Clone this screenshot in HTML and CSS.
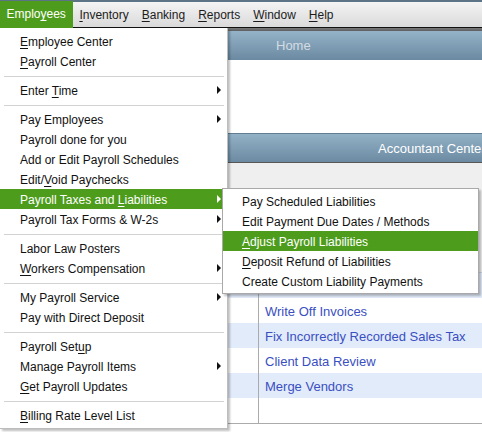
FILE: index.html
```html
<!DOCTYPE html>
<html lang="en">
<head>
    <meta charset="UTF-8">
    <meta name="viewport" content="width=device-width, initial-scale=1.0">
    <title>Employees Menu</title>
    <link rel="stylesheet" href="styles.css">
</head>
<body>
    <div class="menubar">
        <span class="mb-item active">Emplo<u>y</u>ees</span>
        <span class="mb-item"><u>I</u>nventory</span>
        <span class="mb-item"><u>B</u>anking</span>
        <span class="mb-item"><u>R</u>eports</span>
        <span class="mb-item"><u>W</u>indow</span>
        <span class="mb-item"><u>H</u>elp</span>
    </div>

    <div class="app">
        <div class="strip"></div>
        <div class="bar home-bar"><span class="home-title">Home</span></div>
        <div class="blank"></div>
        <div class="bar center-bar"><span class="center-title">Accountant Center</span></div>
        <div class="panel"></div>
        <div class="tasks">
            <div class="task alt"><span class="gutter"></span></div>
            <div class="task"><span class="gutter"></span><a class="task-link">Write Off Invoices</a></div>
            <div class="task alt"><span class="gutter"></span><a class="task-link">Fix Incorrectly Recorded Sales Tax</a></div>
            <div class="task"><span class="gutter"></span><a class="task-link">Client Data Review</a></div>
            <div class="task alt"><span class="gutter"></span><a class="task-link">Merge Vendors</a></div>
            <div class="task"><span class="gutter"></span></div>
        </div>
    </div>

    <div class="menu">
        <div class="item"><u>E</u>mployee Center</div>
        <div class="item"><u>P</u>ayroll Center</div>
        <div class="sep"></div>
        <div class="item sub">Enter <u>T</u>ime</div>
        <div class="sep"></div>
        <div class="item sub">Pay Employees</div>
        <div class="item">Payroll done for you</div>
        <div class="item">Add or Edit Payroll Schedules</div>
        <div class="item">Edit/<u>V</u>oid Paychecks</div>
        <div class="item sub selected">Payroll Taxes and <u>L</u>iabilities</div>
        <div class="item sub">Payroll Tax Forms &amp; W-2s</div>
        <div class="sep"></div>
        <div class="item">Labor Law Posters</div>
        <div class="item sub"><u>W</u>orkers Compensation</div>
        <div class="sep"></div>
        <div class="item sub">My Payroll Service</div>
        <div class="item">Pay with Direct Deposit</div>
        <div class="sep"></div>
        <div class="item">Payroll Set<u>u</u>p</div>
        <div class="item sub">Manage Payroll Items</div>
        <div class="item"><u>G</u>et Payroll Updates</div>
        <div class="sep"></div>
        <div class="item"><u>B</u>illing Rate Level List</div>
    </div>

    <div class="submenu">
        <div class="item">Pay Scheduled Liabilities</div>
        <div class="item">Edit Payment Due Dates / Methods</div>
        <div class="item selected"><u>A</u>djust Payroll Liabilities</div>
        <div class="item"><u>D</u>eposit Refund of Liabilities</div>
        <div class="item">Create Custom Liability Payments</div>
    </div>
</body>
</html>
```

FILE: styles.css
```css
body {
    font-family: "Liberation Sans", Arial, sans-serif;
    font-size: 12px;
    margin: 0;
    width: 482px;
    height: 432px;
    overflow: hidden;
    position: relative;
    background: #fff;
    color: #111;
}

u {
    text-decoration-thickness: 1px;
    text-underline-offset: 2px;
}

/* top menu bar */

.menubar {
    display: flex;
    height: 25px;
    border-top: 2px solid #5d7386;
    border-bottom: 1px solid #111;
    background: linear-gradient(#f4f4f4, #dadada);
    white-space: nowrap;
}

.mb-item {
    padding: 0 6.5px;
    line-height: 26px;
    color: #1c1c1c;
}

.mb-item.active {
    background-color: #4e9c1c;
    color: #fff;
    margin-top: -1px;
    margin-bottom: -1px;
    line-height: 27px;
    padding-right: 7px;
    position: relative;
}

/* application window behind the menu */

.strip {
    height: 3px;
    background: linear-gradient(#7a7a7a, #5e5e5e);
}

.bar {
    display: flex;
    align-items: center;
    white-space: nowrap;
    overflow: hidden;
    font-size: 13px;
}

.home-bar {
    height: 29px;
    background: linear-gradient(#94b2c8, #6b8aa1);
}

.home-title {
    padding-left: 276px;
    color: #d4dce3;
}

.blank {
    height: 73px;
}

.center-bar {
    height: 28px;
    border-top: 1px solid #627d91;
    border-bottom: 1px solid #575757;
    background: linear-gradient(#92b0c6, #6c8ba2);
}

.center-title {
    padding-left: 378px;
    color: #fff;
}

.panel {
    height: 109px;
    background-color: #efefef;
}

.tasks {
    border-top: 1px solid #c9d3e0;
    border-bottom: 1px solid #ababab;
}

.task {
    display: flex;
    height: 25px;
    align-items: center;
    white-space: nowrap;
    font-size: 13px;
}

.task.alt {
    background-color: #e2ebfa;
}

.gutter {
    flex: none;
    width: 258px;
    height: 100%;
    border-right: 1px solid #ababab;
}

.task-link {
    padding: 2px 0 0 6px;
    color: #3a4fc2;
}

/* dropdown menus */

.menu {
    position: absolute;
    top: 28px;
    left: 0;
    width: 224px;
    padding: 3px 3px 3px 0;
    background: #fff;
    border-right: 1px solid #bdbdbd;
    border-bottom: 1px solid #bdbdbd;
    box-shadow: 2px 2px 2px rgba(0, 0, 0, 0.25);
}

.item {
    position: relative;
    height: 19px;
    padding-top: 1px;
    line-height: 20px;
    padding-left: 20px;
    white-space: nowrap;
}

.item.selected {
    background-color: #4e9c1c;
    color: #fff;
}

.item.sub::after {
    content: "";
    position: absolute;
    right: 3px;
    top: 6px;
    border-left: 4px solid #111;
    border-top: 4px solid transparent;
    border-bottom: 4px solid transparent;
}

.item.sub.selected::after {
    border-left-color: #fff;
}

.sep {
    height: 1px;
    margin: 5px 0 3px 4px;
    background-color: #d2d2d2;
}

.submenu {
    position: absolute;
    top: 188px;
    left: 222px;
    width: 255px;
    padding: 2px 0;
    background: #fff;
    border: 1px solid #a9a9a9;
    box-shadow: 2px 2px 2px rgba(0, 0, 0, 0.25);
}

.submenu .item {
    padding-left: 19px;
}
```
